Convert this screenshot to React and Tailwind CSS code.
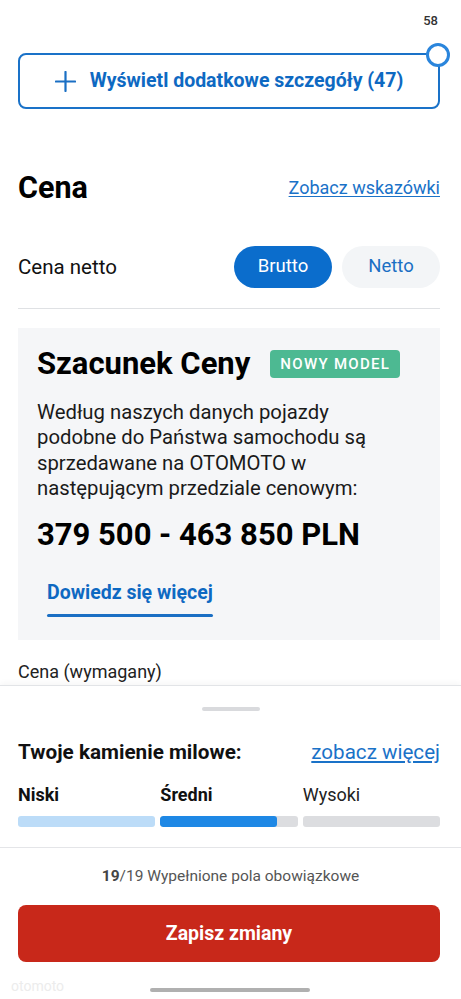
import React from "react";

export default function App() {
  return (
    <div className="relative w-[461px] h-[999px] overflow-hidden bg-white text-[#111]" style={{ fontFamily: "Roboto, 'Noto Sans', sans-serif" }}>
      <div className="pt-[13px] pr-[23px] text-right text-[13px] leading-[16px] font-medium text-[#333]">58</div>
      <div className="relative ml-[18px] mr-[21px] mt-[24px]">
        <button className="w-full h-[56px] border-2 border-[#1a72c8] rounded-[8px] flex items-center justify-center gap-[14px] text-[#0e69c2]">
          <svg width="21" height="21" viewBox="0 0 22 22" fill="none" stroke="#1a6fc4" strokeWidth="2.3" strokeLinecap="round">
            <path d="M11 1v20M1 11h20" />
          </svg>
          <span className="text-[19.5px] font-bold leading-[26px]">Wyświetl dodatkowe szczegóły (47)</span>
        </button>
        <div className="absolute right-[-10px] top-[-10px] w-[24px] h-[24px] rounded-full border-[3px] border-[#2a85dc] bg-white" />
      </div>

      <div className="ml-[18px] mr-[21px] mt-[62px] flex items-center justify-between">
        <h2 className="text-[30.5px] font-bold leading-[34px] text-black">Cena</h2>
        <a className="text-[18px] leading-[22px] text-[#1a72c8] underline underline-offset-2">Zobacz wskazówki</a>
      </div>

      <div className="ml-[18px] mr-[21px] mt-[41px] flex items-center justify-between h-[42px]">
        <span className="text-[20.5px] text-[#111]">Cena netto</span>
        <div className="flex gap-[10px]">
          <div className="w-[98px] h-[42px] rounded-full bg-[#0b6dcc] text-white text-[18.5px] flex items-center justify-center">Brutto</div>
          <div className="w-[98px] h-[42px] rounded-full bg-[#f3f5f7] text-[#1a6fc4] text-[18.5px] flex items-center justify-center">Netto</div>
        </div>
      </div>
      <div className="ml-[18px] mr-[21px] mt-[20px] h-px bg-[#dfe1e4]" />

      <div className="ml-[18px] mr-[21px] mt-[19px] bg-[#f5f6f8] pl-[19px] pr-[30px] pt-[19px] pb-[23px]">
        <div className="flex items-center gap-[20px]">
          <h3 className="text-[31px] font-bold leading-[34px] text-black">Szacunek Ceny</h3>
          <span className="h-[28px] px-[10px] rounded-[4px] bg-[#4db992] text-white text-[15px] font-medium tracking-[1.3px] flex items-center">NOWY MODEL</span>
        </div>
        <p className="mt-[19px] text-[20.3px] leading-[25.3px] text-[#1a1a1a]">
          Według naszych danych pojazdy podobne do Państwa samochodu są sprzedawane na OTOMOTO w następującym przedziale cenowym:
        </p>
        <div className="mt-[17px] text-[31px] font-bold leading-[34px] text-black">379 500 - 463 850 PLN</div>
        <div className="mt-[28px] ml-[10px] inline-flex flex-col">
          <span className="text-[19.5px] font-bold leading-[26px] text-[#0e69c2]">Dowiedz się więcej</span>
          <span className="mt-[8px] h-[3px] bg-[#1a6fc4] rounded-full" />
        </div>
      </div>

      <div className="ml-[18px] mt-[21px] text-[18px] leading-[22px] text-[#222]">Cena (wymagany)</div>

      <div className="absolute left-0 right-0 bottom-0 h-[314px] bg-white border-t border-[#e2e4e7] shadow-[0_-2px_6px_rgba(0,0,0,0.04)]">
        <div className="mx-auto mt-[21px] w-[58px] h-[4px] rounded-full bg-[#d9dadd]" />
        <div className="ml-[18px] mr-[21px] mt-[28px] flex items-center justify-between">
          <span className="text-[20.7px] font-bold leading-[26px] text-[#111]">Twoje kamienie milowe:</span>
          <a className="text-[20.6px] leading-[26px] text-[#1a72c8] underline underline-offset-2">zobacz więcej</a>
        </div>
        <div className="ml-[18px] mr-[21px] mt-[19px] grid grid-cols-3 gap-[5px] text-[18px] leading-[22px]">
          <span className="font-bold text-[#111]">Niski</span>
          <span className="font-bold text-[#111]">Średni</span>
          <span className="text-[#222]">Wysoki</span>
        </div>
        <div className="ml-[18px] mr-[21px] mt-[10px] grid grid-cols-3 gap-[5px]">
          <div className="h-[11px] rounded-[3px] bg-[#bcdcf8]" />
          <div className="h-[11px] rounded-[3px] bg-[#dcdde0] overflow-hidden">
            <div className="h-full w-[85%] rounded-[3px] bg-[#1e88e5]" />
          </div>
          <div className="h-[11px] rounded-[3px] bg-[#dcdde0]" />
        </div>
        <div className="mt-[20px] h-px bg-[#e4e5e8]" />
        <div className="mt-[18px] text-center text-[15.5px] leading-[20px] text-[#555]">
          <span className="font-bold text-[#444]">19</span>/19 Wypełnione pola obowiązkowe
        </div>
        <button className="ml-[18px] mt-[19px] w-[422px] h-[57px] rounded-[8px] bg-[#c8281a] text-white text-[19.5px] font-bold flex items-center justify-center">Zapisz zmiany</button>
        <div className="mt-[16px] flex items-center">
          <span className="ml-[11px] text-[14px] text-[#ececec] leading-[16px]">otomoto</span>
        </div>
        <div className="absolute left-[150px] bottom-[7px] w-[160px] h-[4px] rounded-full bg-[#b0b0b0]" />
      </div>
    </div>
  );
}
